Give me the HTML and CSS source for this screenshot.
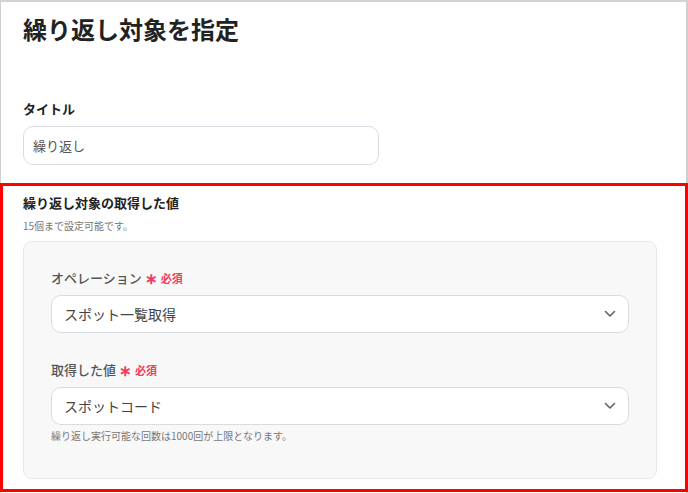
FILE: index.html
```html
<!DOCTYPE html>
<html lang="ja">
<head>
  <meta charset="UTF-8">
  <meta name="viewport" content="width=device-width, initial-scale=1.0">
  <title>繰り返し対象を指定</title>
  <link rel="stylesheet" href="styles.css">
</head>
<body>
  <div class="page">
    <h1>繰り返し対象を指定</h1>

    <!-- Title field -->
    <div class="field">
      <label class="field-label" for="loopTitle">タイトル</label>
      <input type="text" id="loopTitle" class="text-input" value="繰り返し" />
    </div>

    <!-- Highlighted section -->
    <section class="highlight">
      <h2>繰り返し対象の取得した値</h2>
      <p class="hint">15個まで設定可能です。</p>

      <div class="panel">
        <div class="panel-group">
          <div class="group-label">オペレーション<span class="req"><span class="star">∗</span>必須</span></div>
          <div class="select">
            <span>スポット一覧取得</span>
            <svg class="chevron" width="12" height="8" viewBox="0 0 12 8"><path d="M1.5 1.5 6 6l4.5-4.5" fill="none" stroke="#5f6368" stroke-width="1.6" stroke-linecap="round" stroke-linejoin="round"/></svg>
          </div>
        </div>

        <div class="panel-group">
          <div class="group-label">取得した値<span class="req"><span class="star">∗</span>必須</span></div>
          <div class="select">
            <span>スポットコード</span>
            <svg class="chevron" width="12" height="8" viewBox="0 0 12 8"><path d="M1.5 1.5 6 6l4.5-4.5" fill="none" stroke="#5f6368" stroke-width="1.6" stroke-linecap="round" stroke-linejoin="round"/></svg>
          </div>
          <p class="help">繰り返し実行可能な回数は1000回が上限となります。</p>
        </div>
      </div>
    </section>
  </div>
</body>
</html>
```

FILE: styles.css
```css
body {
  margin: 0;
  font-family: "Noto Sans CJK JP", "Noto Sans", sans-serif;
  background: #fff;
  color: #222;
}

.page {
  border-top: 2px solid #d4d4d4;
  border-left: 1px solid #cfcfcf;
  border-right: 2px solid #cfcfcf;
  padding: 11px 0 0 22px;
  height: 493px;
  box-sizing: border-box;
}

h1 {
  margin: 0;
  font-size: 24px;
  line-height: 32px;
  font-weight: 700;
  color: #222;
}

.field {
  margin-top: 55px;
}

.field-label {
  display: block;
  font-size: 13px;
  line-height: 18px;
  font-weight: 700;
  color: #222;
}

.text-input {
  display: block;
  margin-top: 8px;
  width: 356px;
  height: 39px;
  box-sizing: border-box;
  padding: 0 9px;
  border: 1px solid #d9dde3;
  border-radius: 10px;
  font-family: inherit;
  font-size: 13px;
  color: #555;
  outline: none;
}

.highlight {
  margin: 18px -2px 0 -23px;
  border: 3px solid #ff0000;
  padding: 8px 28px 10px 20px;
}

.highlight h2 {
  margin: 0;
  font-size: 13px;
  line-height: 18px;
  font-weight: 700;
  color: #222;
}

.hint {
  margin: 7px 0 0;
  font-size: 10px;
  line-height: 14px;
  color: #777;
}

.panel {
  margin-top: 8px;
  background: #f8f8f9;
  border: 1px solid #e6e8eb;
  border-radius: 9px;
  padding: 27px 27px 35px;
  display: flex;
  flex-direction: column;
  gap: 28px;
}

.group-label {
  font-size: 13px;
  line-height: 18px;
  font-weight: 500;
  color: #555;
  display: flex;
  align-items: center;
}

.req {
  margin-left: 3px;
  color: #f23c5c;
  font-size: 11px;
  font-weight: 700;
  display: inline-flex;
  align-items: center;
}

.star {
  font-size: 15px;
  margin-right: 3px;
}

.select {
  margin-top: 8px;
  height: 38px;
  box-sizing: border-box;
  background: #fff;
  border: 1px solid #d9dde3;
  border-radius: 10px;
  padding: 0 12px;
  display: flex;
  align-items: center;
  justify-content: space-between;
  font-size: 14px;
  color: #444;
}

.help {
  margin: 4px 0 0;
  font-size: 10px;
  line-height: 14px;
  color: #777;
}
```
